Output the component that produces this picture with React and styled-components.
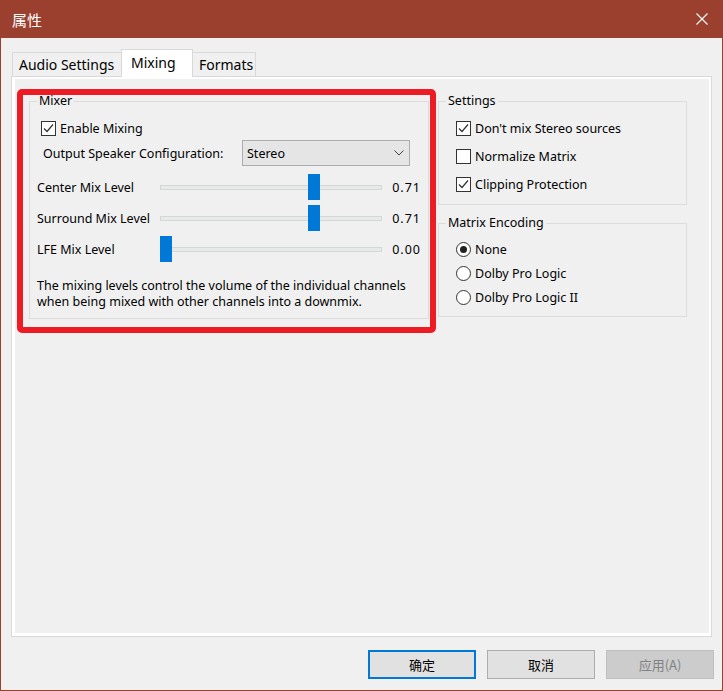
import React from 'react'
import styled, { createGlobalStyle } from 'styled-components'

const FONT = `"Noto Sans", "Noto Sans CJK SC", sans-serif`
const CJK = `"Noto Sans CJK SC", "Noto Sans", sans-serif`
const BROWN = '#9b3f2f'
const BLUE = '#0078d7'

const GlobalStyle = createGlobalStyle`
  html, body {
    margin: 0;
    padding: 0;
    background: #f0f0f0;
  }
  body {
    font-family: ${FONT};
    font-size: 12px;
    color: #000;
  }
  * {
    box-sizing: border-box;
  }
`

const sliders = [
  { label: 'Center Mix Level', value: 0.71 },
  { label: 'Surround Mix Level', value: 0.71 },
  { label: 'LFE Mix Level', value: 0 },
]

const settings = [
  { label: "Don't mix Stereo sources", checked: true },
  { label: 'Normalize Matrix', checked: false },
  { label: 'Clipping Protection', checked: true },
]

const encodings = [
  { label: 'None', checked: true },
  { label: 'Dolby Pro Logic', checked: false },
  { label: 'Dolby Pro Logic II', checked: false },
]

export default function App () {
  return (
    <>
      <GlobalStyle />
      <Window>
        <TitleBar>
          <Title>属性</Title>
          <CloseIcon viewBox='0 0 12 12'>
            <path d='M0.5 0.5 L11.5 11.5 M11.5 0.5 L0.5 11.5' />
          </CloseIcon>
        </TitleBar>

        <Body>
          <TabStrip>
            <Tab width={110}>Audio Settings</Tab>
            <Tab width={72} active>Mixing</Tab>
            <Tab width={64}>Formats</Tab>
          </TabStrip>

          <Panel>
            <Page>
              <GroupBox pad='10px 7px 8px'>
                <Legend>Mixer</Legend>
                <Row indent={4}>
                  <Checkbox checked />
                  <span>Enable Mixing</span>
                </Row>
                <ConfigRow>
                  <span>Output Speaker Configuration:</span>
                  <Combo>
                    <span>Stereo</span>
                    <Chevron viewBox='0 0 10 6'>
                      <path d='M0.5 0.5 L5 5 L9.5 0.5' />
                    </Chevron>
                  </Combo>
                </ConfigRow>
                <SliderList>
                  {sliders.map(s => (
                    <SliderRow key={s.label}>
                      <SliderLabel>{s.label}</SliderLabel>
                      <Track>
                        <Thumb style={{ left: `${Math.round(s.value * 209) - 1}px` }} />
                      </Track>
                      <SliderValue>{s.value.toFixed(2)}</SliderValue>
                    </SliderRow>
                  ))}
                </SliderList>
                <Description>
                  The mixing levels control the volume of the individual channels
                  <br />
                  when being mixed with other channels into a downmix.
                </Description>
              </GroupBox>

              <Column>
                <GroupBox pad='10px 7px 10px'>
                  <Legend>Settings</Legend>
                  <OptionList gap={8}>
                    {settings.map(s => (
                      <Row key={s.label} indent={10}>
                        <Checkbox checked={s.checked} />
                        <span>{s.label}</span>
                      </Row>
                    ))}
                  </OptionList>
                </GroupBox>
                <GroupBox pad='9px 7px 9px'>
                  <Legend>Matrix Encoding</Legend>
                  <OptionList gap={4}>
                    {encodings.map(s => (
                      <Row key={s.label} indent={10}>
                        <Radio checked={s.checked} />
                        <span>{s.label}</span>
                      </Row>
                    ))}
                  </OptionList>
                </GroupBox>
              </Column>
            </Page>
          </Panel>

          <ButtonRow>
            <Button kind='default'>确定</Button>
            <Button>取消</Button>
            <Button kind='disabled'>应用(A)</Button>
          </ButtonRow>
        </Body>

        <Highlight />
      </Window>
    </>
  )
}

const Checkbox = ({ checked }) => (
  <Box>
    {checked && (
      <svg width='13' height='13' viewBox='0 0 13 13'>
        <path d='M2 6.5 L5 9.5 L11 2.5' fill='none' stroke='#333' strokeWidth='1.2' />
      </svg>
    )}
  </Box>
)

const Radio = ({ checked }) => (
  <Circle>
    {checked && <Dot />}
  </Circle>
)

const Window = styled.div`
  position: relative;
  width: 723px;
  height: 691px;
  display: flex;
  flex-direction: column;
  border: 1px solid ${BROWN};
  border-top: none;
  background: #f0f0f0;
`

const TitleBar = styled.div`
  height: 38px;
  flex: none;
  display: flex;
  align-items: center;
  justify-content: space-between;
  padding: 0 15px 0 11px;
  margin: 0 -1px;
  background: ${BROWN};
`

const Title = styled.div`
  font-family: ${CJK};
  font-size: 15px;
  color: #fff;
  margin-left: 1px;
`

const CloseIcon = styled.svg`
  width: 12px;
  height: 12px;
  stroke: #fff;
  stroke-width: 1.1;
  fill: none;
`

const Body = styled.div`
  flex: 1;
  display: flex;
  flex-direction: column;
  padding: 11px 10px 11px;
`

const TabStrip = styled.div`
  position: relative;
  z-index: 1;
  height: 28px;
  display: flex;
  align-items: flex-end;
  padding-left: 1px;
`

const Tab = styled.div`
  width: ${p => p.width}px;
  height: ${p => (p.active ? 28 : 24)}px;
  margin-bottom: ${p => (p.active ? 0 : 1)}px;
  margin-left: -1px;
  display: flex;
  align-items: center;
  padding: ${p => (p.active ? '0 0 3px 9px' : '0 0 0 6px')};
  border: 1px solid #d9d9d9;
  border-bottom: none;
  background: ${p => (p.active ? '#fff' : '#f0f0f0')};
  font-size: 14px;
  white-space: nowrap;

  &:first-child {
    margin-left: 0;
  }
`

const Panel = styled.div`
  flex: 1;
  margin-top: -1px;
  border: 1px solid #d9d9d9;
  background: #fff;
  padding: 2px 2px 3px 3px;
`

const Page = styled.div`
  height: 100%;
  background: #f0f0f0;
  padding: 15px 0 0 14px;
  display: grid;
  grid-template-columns: 400px 249px;
  column-gap: 9px;
  align-items: start;
`

const Column = styled.div`
  display: flex;
  flex-direction: column;
  gap: 11px;
`

const GroupBox = styled.fieldset`
  margin: 0;
  min-width: 0;
  padding: ${p => p.pad};
  border: 1px solid #dcdcdc;
  display: flex;
  flex-direction: column;
`

const Legend = styled.legend`
  padding: 0 2px;
  line-height: 14px;
  font-size: 12.5px;
`

const Row = styled.div`
  height: 20px;
  display: flex;
  align-items: center;
  gap: 4px;
  margin-left: ${p => p.indent || 0}px;
  font-size: 12.5px;
  white-space: nowrap;
`

const OptionList = styled.div`
  display: flex;
  flex-direction: column;
  gap: ${p => p.gap}px;
`

const Box = styled.div`
  width: 15px;
  height: 15px;
  flex: none;
  border: 1px solid #333;
  background: #fff;
  display: flex;
  align-items: center;
  justify-content: center;
`

const Circle = styled.div`
  width: 15px;
  height: 15px;
  flex: none;
  border: 1px solid #333;
  border-radius: 50%;
  background: #fff;
  display: flex;
  align-items: center;
  justify-content: center;
`

const Dot = styled.div`
  width: 7px;
  height: 7px;
  border-radius: 50%;
  background: #222;
`

const ConfigRow = styled.div`
  height: 26px;
  margin: 2px 11px 0 6px;
  display: flex;
  align-items: center;
  justify-content: space-between;
  font-size: 12.5px;
`

const Combo = styled.div`
  width: 168px;
  height: 26px;
  display: flex;
  align-items: center;
  justify-content: space-between;
  padding: 0 5px 0 4px;
  border: 1px solid #adadad;
  background: #e5e5e5;
`

const Chevron = styled.svg`
  width: 10px;
  height: 6px;
  fill: none;
  stroke: #444;
  stroke-width: 1;
`

const SliderList = styled.div`
  margin-top: 6px;
  display: flex;
  flex-direction: column;
`

const SliderRow = styled.div`
  height: 31px;
  display: flex;
  align-items: center;
  font-size: 12.5px;
`

const SliderLabel = styled.div`
  width: 123px;
  white-space: nowrap;
`

const Track = styled.div`
  position: relative;
  width: 223px;
  height: 5px;
  border: 1px solid #d6d6d6;
  background: #e7eaea;
`

const Thumb = styled.div`
  position: absolute;
  top: -12px;
  width: 12px;
  height: 26px;
  background: ${BLUE};
`

const SliderValue = styled.div`
  margin-left: 10px;
  letter-spacing: 1px;
`

const Description = styled.div`
  margin-top: 13px;
  line-height: 16px;
  font-size: 12.5px;
`

const ButtonRow = styled.div`
  display: flex;
  justify-content: flex-end;
  gap: 11px;
  margin: 13px -2px 0 0;
`

const Button = styled.div`
  width: 108px;
  height: 29px;
  display: flex;
  align-items: center;
  justify-content: center;
  font-family: ${CJK};
  font-size: 13px;
  border: 1px solid ${p => (p.kind === 'default' ? BLUE : p.kind === 'disabled' ? '#bfbfbf' : '#adadad')};
  box-shadow: ${p => (p.kind === 'default' ? `inset 0 0 0 1px ${BLUE}` : 'none')};
  background: ${p => (p.kind === 'disabled' ? '#cccccc' : '#e1e1e1')};
  color: ${p => (p.kind === 'disabled' ? '#838383' : '#000')};
`

// red annotation drawn over the mixer group
const Highlight = styled.div`
  position: absolute;
  left: 16px;
  top: 89px;
  width: 419px;
  height: 244px;
  border: 6px solid #ed1c24;
  border-radius: 5px;
  pointer-events: none;
`
